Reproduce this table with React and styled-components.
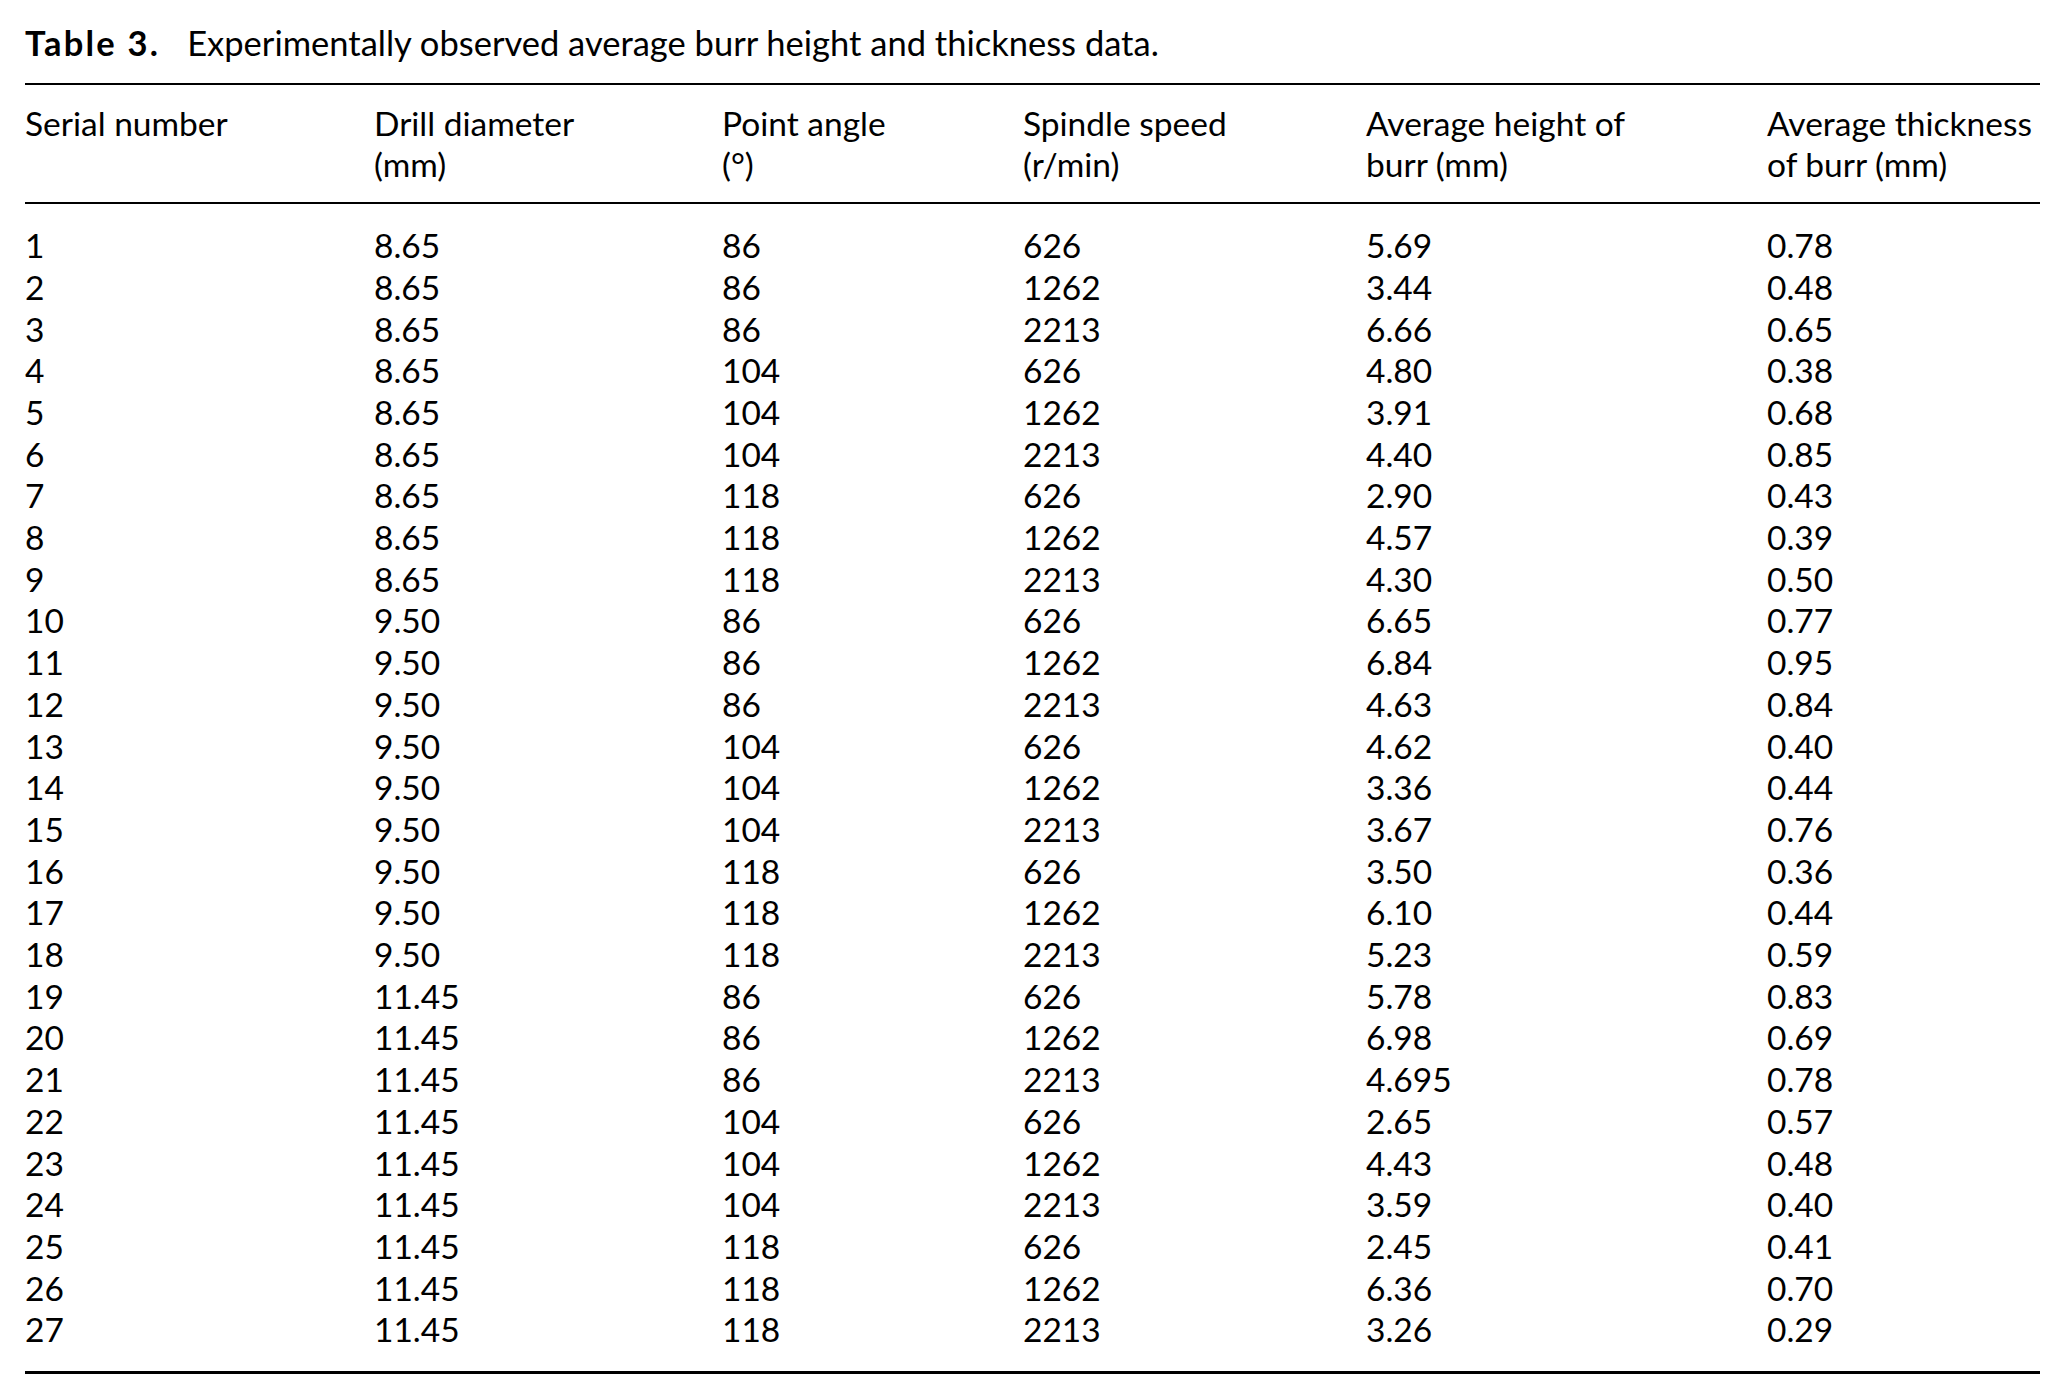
import React from 'react';
import styled, { createGlobalStyle } from 'styled-components';

const columns = '349px 348px 301px 343px 401px 1fr';

const header = [
  ['Serial number', ''],
  ['Drill diameter', '(mm)'],
  ['Point angle', '(°)'],
  ['Spindle speed', '(r/min)'],
  ['Average height of', 'burr (mm)'],
  ['Average thickness', 'of burr (mm)'],
];

const rows = [
  ['1', '8.65', '86', '626', '5.69', '0.78'],
  ['2', '8.65', '86', '1262', '3.44', '0.48'],
  ['3', '8.65', '86', '2213', '6.66', '0.65'],
  ['4', '8.65', '104', '626', '4.80', '0.38'],
  ['5', '8.65', '104', '1262', '3.91', '0.68'],
  ['6', '8.65', '104', '2213', '4.40', '0.85'],
  ['7', '8.65', '118', '626', '2.90', '0.43'],
  ['8', '8.65', '118', '1262', '4.57', '0.39'],
  ['9', '8.65', '118', '2213', '4.30', '0.50'],
  ['10', '9.50', '86', '626', '6.65', '0.77'],
  ['11', '9.50', '86', '1262', '6.84', '0.95'],
  ['12', '9.50', '86', '2213', '4.63', '0.84'],
  ['13', '9.50', '104', '626', '4.62', '0.40'],
  ['14', '9.50', '104', '1262', '3.36', '0.44'],
  ['15', '9.50', '104', '2213', '3.67', '0.76'],
  ['16', '9.50', '118', '626', '3.50', '0.36'],
  ['17', '9.50', '118', '1262', '6.10', '0.44'],
  ['18', '9.50', '118', '2213', '5.23', '0.59'],
  ['19', '11.45', '86', '626', '5.78', '0.83'],
  ['20', '11.45', '86', '1262', '6.98', '0.69'],
  ['21', '11.45', '86', '2213', '4.695', '0.78'],
  ['22', '11.45', '104', '626', '2.65', '0.57'],
  ['23', '11.45', '104', '1262', '4.43', '0.48'],
  ['24', '11.45', '104', '2213', '3.59', '0.40'],
  ['25', '11.45', '118', '626', '2.45', '0.41'],
  ['26', '11.45', '118', '1262', '6.36', '0.70'],
  ['27', '11.45', '118', '2213', '3.26', '0.29'],
];

const App = () => (
  <>
    <GlobalStyle />
    <Page>
      <Caption>
        <CaptionLabel>Table 3.</CaptionLabel>
        Experimentally observed average burr height and thickness data.
      </Caption>
      <Table>
        <HeaderRow>
          {header.map(([first, second]) => (
            <HeaderCell key={first}>
              <div>{first}</div>
              <div>{second || '\u00a0'}</div>
            </HeaderCell>
          ))}
        </HeaderRow>
        <Body>
          {rows.map(row => (
            <Row key={row[0]}>
              {row.map((value, i) => (
                <Cell key={i}>{value}</Cell>
              ))}
            </Row>
          ))}
        </Body>
      </Table>
    </Page>
  </>
);

export default App;

const GlobalStyle = createGlobalStyle`
  html, body {
    margin: 0;
    padding: 0;
    background: #fff;
  }
  body {
    font-family: Lato, 'Noto Sans', sans-serif;
    color: #000;
  }
`;

const Page = styled.div`
  width: 2015px;
  padding: 22px 0 0 25px;
  font-size: 33.5px;
  line-height: 41.7px;
`;

const Caption = styled.div`
  margin-bottom: 19px;
  font-size: 34.5px;
  white-space: nowrap;
`;

const CaptionLabel = styled.span`
  font-weight: 700;
  letter-spacing: 2.2px;
  margin-right: 27px;
`;

const Table = styled.div`
  border-top: 2.5px solid #000;
  border-bottom: 3px solid #000;
`;

const HeaderRow = styled.div`
  display: grid;
  grid-template-columns: ${columns};
  padding: 18px 0 16px;
  border-bottom: 2.5px solid #000;
`;

const HeaderCell = styled.div`
  white-space: nowrap;
`;

const Body = styled.div`
  padding: 21px 0 20px;
`;

const Row = styled.div`
  display: grid;
  grid-template-columns: ${columns};
`;

const Cell = styled.div`
  white-space: nowrap;
`;
